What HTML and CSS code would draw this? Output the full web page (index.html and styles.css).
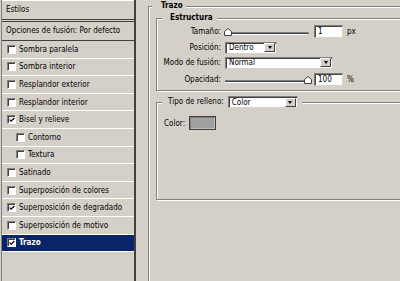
FILE: index.html
```html
<!DOCTYPE html>
<html lang="es">
<head>
<meta charset="UTF-8" />
<title>Estilo de capa - Trazo</title>
<link rel="stylesheet" href="styles.css">
</head>
<body>

<div class="dialog">
  <div class="styles">
    <div class="head">Estilos</div>
    <div class="head opts">Opciones de fusión: Por defecto</div>
    <ul class="fx">
      <li><span class="cb"></span>Sombra paralela</li>
      <li><span class="cb"></span>Sombra interior</li>
      <li><span class="cb"></span>Resplandor exterior</li>
      <li><span class="cb"></span>Resplandor interior</li>
      <li><span class="cb on"><svg viewBox="0 0 6 6"><polyline points="0.6,2.6 2.2,4.2 5.4,1" /></svg></span>Bisel y relieve</li>
      <li class="sub"><span class="cb"></span>Contorno</li>
      <li class="sub"><span class="cb"></span>Textura</li>
      <li><span class="cb"></span>Satinado</li>
      <li><span class="cb"></span>Superposición de colores</li>
      <li><span class="cb on"><svg viewBox="0 0 6 6"><polyline points="0.6,2.6 2.2,4.2 5.4,1" /></svg></span>Superposición de degradado</li>
      <li><span class="cb"></span>Superposición de motivo</li>
      <li class="sel"><span class="cb on"><svg viewBox="0 0 6 6"><polyline points="0.6,2.6 2.2,4.2 5.4,1" /></svg></span>Trazo</li>
    </ul>
  </div>

  <div class="panel">
    <fieldset class="group stroke">
      <legend>Trazo</legend>

      <fieldset class="group struct">
        <legend>Estructura</legend>
        <div class="row r1">
          <label>Tamaño:</label>
          <div class="slider">
            <div class="track"></div>
            <svg class="thumb" style="left: -1px" viewBox="0 0 8 8"><path d="M0.5 7.5 V3.5 L4 0.5 L7.5 3.5 V7.5 Z" /></svg>
          </div>
          <span class="field">1</span>
          <span class="unit">px</span>
        </div>
        <div class="row r2">
          <label>Posición:</label>
          <div class="select pos"><span>Dentro</span><i class="drop"></i></div>
        </div>
        <div class="row r3">
          <label>Modo de fusión:</label>
          <div class="select mode"><span>Normal</span><i class="drop"></i></div>
        </div>
        <div class="row r4">
          <label>Opacidad:</label>
          <div class="slider">
            <div class="track"></div>
            <svg class="thumb" style="left: 79px" viewBox="0 0 8 8"><path d="M0.5 7.5 V3.5 L4 0.5 L7.5 3.5 V7.5 Z" /></svg>
          </div>
          <span class="field">100</span>
          <span class="unit">%</span>
        </div>
      </fieldset>

      <fieldset class="group fill">
        <legend><span>Tipo de relleno:</span><div class="select kind"><span>Color</span><i class="drop"></i></div></legend>
        <div class="color-row">
          <span>Color:</span>
          <span class="swatch"></span>
        </div>
      </fieldset>
    </fieldset>
  </div>
</div>

</body>
</html>
```

FILE: styles.css
```css
body {
  margin: 0;
  width: 400px;
  height: 281px;
  overflow: hidden;
  background: #d4d0c8;
  font-family: "DejaVu Sans Condensed", "Liberation Sans", Arial, sans-serif;
  font-size: 8px;
  color: #000;
}
.dialog {
  display: flex;
  height: 281px;
}

/* left list of effects */
.styles {
  width: 132px;
  flex: none;
  margin-left: 1px;
  border-left: 1px solid #808080;
  border-right: 1px solid #404040;
  box-shadow: 1px 0 0 #404040;
}
.head {
  height: 18px;
  line-height: 18px;
  padding-left: 4px;
  border-top: 1px solid #fff;
  border-bottom: 1px solid #404040;
  white-space: nowrap;
}
.head.opts {
  margin-top: 1px;
  border-top: 1px solid #404040;
}
.fx {
  list-style: none;
  margin: 0;
  padding: 0;
}
.fx li {
  display: flex;
  align-items: center;
  height: 17.6px;
  box-sizing: border-box;
  padding-left: 5px;
  border-bottom: 1px solid #fff;
  white-space: nowrap;
}
.fx li.sub {
  padding-left: 14px;
}
.fx li.sel {
  background: #0a246a;
  color: #fff;
  font-weight: bold;
}
.cb {
  width: 7px;
  height: 7px;
  margin-right: 3px;
  background: #fff;
  border: 1px solid;
  border-color: #808080 #fff #fff #808080;
  box-shadow: inset 1px 1px 0 #404040;
  display: flex;
  align-items: center;
  justify-content: center;
}
.cb svg {
  width: 6px;
  height: 6px;
}
.cb polyline {
  fill: none;
  stroke: #000;
  stroke-width: 1.3;
}

/* right side groups */
.panel {
  flex: 1;
  overflow: hidden;
}
.group {
  margin: 0;
  padding: 0;
  border: 1px solid #808080;
  box-shadow: inset 1px 1px 0 #fff, 1px 1px 0 #fff;
}
.group legend {
  background: #d4d0c8;
  line-height: 10px;
  font-weight: bold;
}
.stroke {
  margin: 1px 0 0 13px;
  width: 300px;
  height: 320px;
}
.stroke > legend {
  margin-left: 3px;
  padding: 0 3px 0 9px;
}
.struct {
  margin: 2px 0 0 7px;
  padding: 2px 0 4px 0;
}
.struct > legend {
  margin-left: 5px;
  padding: 0 4px 0 8px;
}
.row {
  display: flex;
  align-items: center;
  height: 13px;
}
.row.r2 { margin-top: 3px; }
.row.r3 { margin-top: 2px; }
.row.r4 { margin-top: 4px; }
.row label {
  width: 64px;
  text-align: right;
  margin-right: 4px;
  white-space: nowrap;
}
.slider {
  position: relative;
  width: 84px;
  height: 13px;
}
.track {
  margin-top: 7px;
  height: 1px;
  background: #404040;
  border-top: 1px solid #808080;
  border-bottom: 1px solid #fff;
  border-radius: 0 2px 2px 0;
}
.thumb {
  position: absolute;
  top: 3px;
  width: 8px;
  height: 8px;
}
.thumb path {
  fill: #fff;
  stroke: #404040;
  stroke-width: 1;
}
.field, .select {
  box-sizing: border-box;
  height: 13px;
  background: #fff;
  border: 1px solid;
  border-color: #808080 #d4d0c8 #d4d0c8 #808080;
  box-shadow: inset 1px 1px 0 #404040;
  padding-left: 3px;
  line-height: 11px;
}
.field {
  width: 29px;
  margin-left: 5px;
}
.unit {
  margin-left: 4px;
}
.select {
  display: flex;
  align-items: center;
  justify-content: space-between;
  height: 12px;
  padding-right: 1px;
}
.select.pos { width: 52px; }
.select.mode { width: 108px; }
.drop {
  width: 11px;
  height: 9px;
  box-sizing: border-box;
  background: #d4d0c8;
  border: 1px solid;
  border-color: #fff #404040 #404040 #fff;
  display: flex;
  align-items: center;
  justify-content: center;
}
.drop::after {
  content: "";
  border-left: 2.5px solid transparent;
  border-right: 2.5px solid transparent;
  border-top: 3px solid #000;
}
.fill {
  margin: 5px 0 0 7px;
  padding: 8px 0 69px 0;
}
.fill > legend {
  margin-left: 5px;
  padding: 0 4px 0 6px;
  font-weight: normal;
  display: flex;
  align-items: center;
  line-height: 12px;
}
.select.kind {
  width: 70px;
  margin-left: 4px;
}
.color-row {
  display: flex;
  align-items: center;
  padding-left: 7px;
}
.swatch {
  width: 27px;
  height: 14px;
  box-sizing: border-box;
  margin-left: 4px;
  background: #a0a0a0;
  border: 1px solid #404040;
  box-shadow: inset 1px 1px 0 #808080, inset -1px -1px 0 #c0c0c0;
}
```
